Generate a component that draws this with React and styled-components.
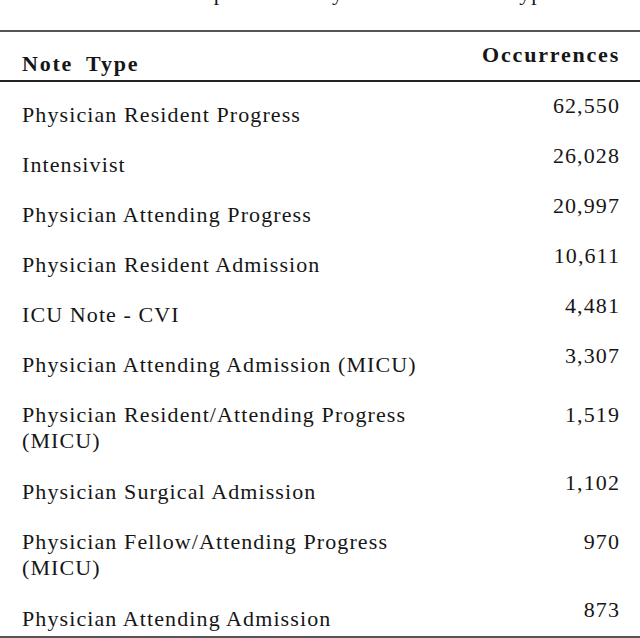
import React from 'react'
import styled, { createGlobalStyle } from 'styled-components'

const GlobalStyle = createGlobalStyle`
  html, body { margin:0; padding:0; background:#fff; }
  body { width:640px; height:638px; overflow:hidden; }
`

const rows = [
  { label: 'Physician Resident Progress', count: '62,550' },
  { label: 'Intensivist', count: '26,028' },
  { label: 'Physician Attending Progress', count: '20,997' },
  { label: 'Physician Resident Admission', count: '10,611' },
  { label: 'ICU Note - CVI', count: '4,481' },
  { label: 'Physician Attending Admission (MICU)', count: '3,307' },
  { label: ['Physician Resident/Attending Progress', '(MICU)'], count: '1,519' },
  { label: 'Physician Surgical Admission', count: '1,102' },
  { label: ['Physician Fellow/Attending Progress', '(MICU)'], count: '970' },
  { label: 'Physician Attending Admission', count: '873' },
]

const Page = styled.div`
  width:640px; height:638px; overflow:hidden;
  font-family:"Liberation Serif", "Times New Roman", serif;
  font-size:22px; color:#161616;
`

// only the descenders of the caption peek in at the top edge
const Caption = styled.div`
  margin-top:-20px; height:50px;
  text-align:center; line-height:26px; letter-spacing:1px;
`

const Table = styled.div`
  border-top:2px solid #555;
  border-bottom:3px solid #555;
`

const Row = styled.div`
  display:grid; grid-template-columns:1fr auto;
  align-items:start;
  padding:0 20px 4px 22px;
  padding-bottom:${p => p.$multi ? 5 : 4}px;
  line-height:26px; letter-spacing:1.1px;
`

const HeadRow = styled(Row)`
  font-weight:bold; padding-bottom:3px;
  letter-spacing:1.8px; word-spacing:6px;
  border-bottom:2px solid #222;
`

const Label = styled.div`
  padding-top:${p => p.$head ? 19 : 20}px;
`

const Count = styled.div`
  text-align:right;
  padding-top:${p => p.$multi ? 20 : p.$head ? 10 : 11}px;
`

export default function App() {
  return (
    <Page>
      <GlobalStyle />
      <Caption>Table 1: Sample counts by MIMIC-III note type</Caption>
      <Table>
        <HeadRow>
          <Label $head>Note Type</Label>
          <Count $head>Occurrences</Count>
        </HeadRow>
        {rows.map((r, i) => {
          const multi = Array.isArray(r.label)
          return (
            <Row key={i} $multi={multi}>
              <Label>
                {multi ? r.label.map((l, j) => <div key={j}>{l}</div>) : r.label}
              </Label>
              <Count $multi={multi}>{r.count}</Count>
            </Row>
          )
        })}
      </Table>
    </Page>
  )
}
